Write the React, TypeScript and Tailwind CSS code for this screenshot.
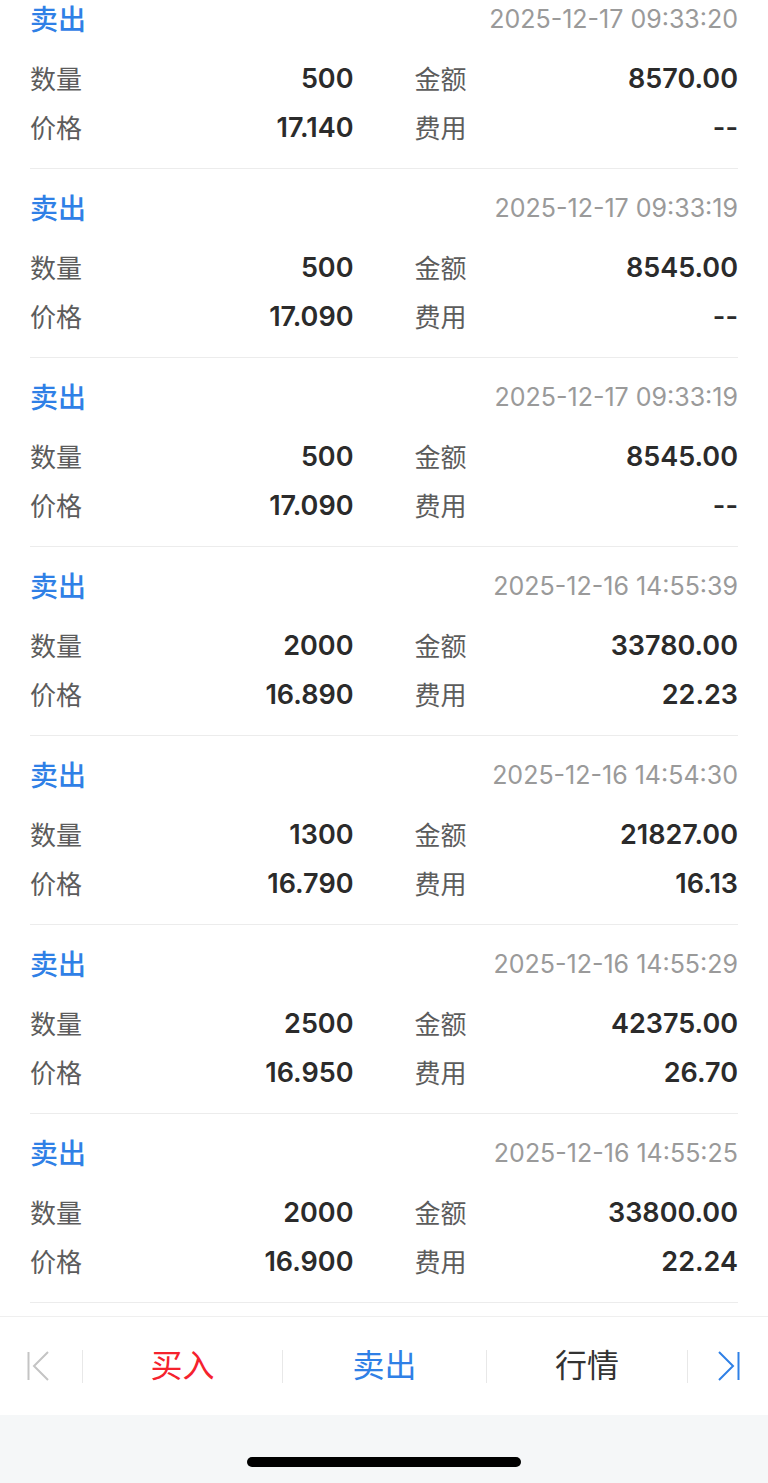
import React from "react";

type Trade = {
  time: string;
  qty: string;
  amount: string;
  price: string;
  fee: string;
};

const trades: Trade[] = [
  { time: "2025-12-17 09:33:20", qty: "500", amount: "8570.00", price: "17.140", fee: "--" },
  { time: "2025-12-17 09:33:19", qty: "500", amount: "8545.00", price: "17.090", fee: "--" },
  { time: "2025-12-17 09:33:19", qty: "500", amount: "8545.00", price: "17.090", fee: "--" },
  { time: "2025-12-16 14:55:39", qty: "2000", amount: "33780.00", price: "16.890", fee: "22.23" },
  { time: "2025-12-16 14:54:30", qty: "1300", amount: "21827.00", price: "16.790", fee: "16.13" },
  { time: "2025-12-16 14:55:29", qty: "2500", amount: "42375.00", price: "16.950", fee: "26.70" },
  { time: "2025-12-16 14:55:25", qty: "2000", amount: "33800.00", price: "16.900", fee: "22.24" },
];

const Cell = ({ label, value }: { label: string; value: string }) => (
  <div className="flex items-center justify-between h-[40px]">
    <span className="text-[26px] text-[#5c5c5c]">{label}</span>
    <span className="text-[27px] font-semibold text-[#2b2b2b]">{value}</span>
  </div>
);

const TradeItem = ({ t }: { t: Trade }) => (
  <div className="mx-[30px] pt-[20px] pb-[20px] border-b border-[#ececec]">
    <div className="flex items-center justify-between h-[40px]">
      <span className="text-[28px] font-medium text-[#2f80e6]">卖出</span>
      <span className="text-[25px] text-[#9a9a9a]">{t.time}</span>
    </div>
    <div className="grid grid-cols-2 gap-x-[61px] mt-[19px]">
      <Cell label="数量" value={t.qty} />
      <Cell label="金额" value={t.amount} />
    </div>
    <div className="grid grid-cols-2 gap-x-[61px] mt-[9px]">
      <Cell label="价格" value={t.price} />
      <Cell label="费用" value={t.fee} />
    </div>
  </div>
);

const Divider = () => <div className="w-px h-[33px] bg-[#e8e8e8]" />;

const App = () => {
  return (
    <div
      className="w-[768px] h-[1483px] bg-white overflow-hidden flex flex-col"
      style={{ fontFamily: 'Inter, "Noto Sans CJK SC", sans-serif' }}
    >
      <div className="-mt-[20px]">
        {trades.map((t, i) => (
          <TradeItem key={i} t={t} />
        ))}
      </div>

      <div className="mt-[13px] h-[99px] border-t border-[#efefef] flex items-center">
        <div className="w-[82px] pl-[27px]">
          <svg width="22" height="30" viewBox="0 0 22 30" fill="none">
            <line x1="1.5" y1="1" x2="1.5" y2="29" stroke="#c4c4c4" strokeWidth="2" />
            <polyline points="21,1 7,15 21,29" stroke="#c4c4c4" strokeWidth="2" fill="none" />
          </svg>
        </div>
        <Divider />
        <div className="w-[199px] text-center text-[32px] text-[#f5222d]">买入</div>
        <Divider />
        <div className="w-[203px] text-center text-[32px] text-[#2f80e6]">卖出</div>
        <Divider />
        <div className="w-[200px] text-center text-[32px] text-[#333]">行情</div>
        <Divider />
        <div className="flex-1 flex justify-end pr-[28px]">
          <svg width="22" height="30" viewBox="0 0 22 30" fill="none">
            <polyline points="1,1 15,15 1,29" stroke="#2f80e6" strokeWidth="2" fill="none" />
            <line x1="20.5" y1="1" x2="20.5" y2="29" stroke="#2f80e6" strokeWidth="2" />
          </svg>
        </div>
      </div>

      <div className="flex-1 bg-[#f5f7f8] flex items-end justify-center pb-[16px]">
        <div className="w-[274px] h-[10px] rounded-full bg-black" />
      </div>
    </div>
  );
};

export default App;
